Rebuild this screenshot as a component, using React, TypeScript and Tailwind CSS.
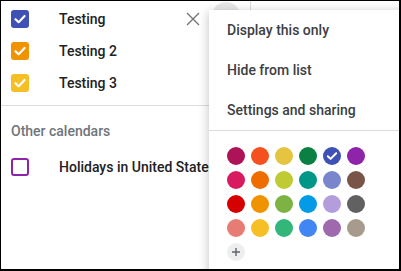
import React from "react";

const palette: string[][] = [
  ["#ad1457", "#f4511e", "#e4c441", "#0b8043", "#3f51b5", "#8e24aa"],
  ["#d81b60", "#ef6c00", "#c0ca33", "#009688", "#7986cb", "#795548"],
  ["#d50000", "#f09300", "#7cb342", "#039be5", "#b39ddb", "#616161"],
  ["#e67c73", "#f6bf26", "#33b679", "#4285f4", "#9e69af", "#a79b8e"],
];

const Check = () => (
  <svg width="18" height="18" viewBox="0 0 18 18" fill="none">
    <path d="M4.5 9.2 L7.6 12.2 L13.6 6" stroke="white" strokeWidth="2.2" strokeLinecap="round" strokeLinejoin="round" />
  </svg>
);

function CalendarRow({ name, color, close }: { name: string; color: string; close?: boolean }) {
  return (
    <div className="flex h-8 items-center pl-[10px]">
      <div className="h-[18px] w-[18px] shrink-0 rounded-[3px]" style={{ backgroundColor: color }}>
        <Check />
      </div>
      <span className="ml-[30px] text-[14px] font-medium text-[#202124]">{name}</span>
      {close && (
        <svg className="ml-auto mr-[10px]" width="14" height="14" viewBox="0 0 14 14">
          <path d="M1 1 L13 13 M13 1 L1 13" stroke="#70757a" strokeWidth="1.4" />
        </svg>
      )}
    </div>
  );
}

export default function App() {
  return (
    <div
      className="relative h-[271px] w-[401px] overflow-hidden border-t border-l border-r-2 border-b-2 border-black bg-white"
      style={{ fontFamily: "Roboto, 'Noto Sans', sans-serif" }}
    >
      <div className="w-[209px] pt-[2px]">
        <CalendarRow name="Testing" color="#3f51b5" close />
        <CalendarRow name="Testing 2" color="#f09300" />
        <CalendarRow name="Testing 3" color="#f6bf26" />
        <div className="mt-[6px] h-px w-[209px] bg-[#dadce0]" />
        <div className="pl-[10px] pt-[17px] text-[14px] font-medium leading-4 text-[#70757a]">Other calendars</div>
        <div className="mt-[12px] flex h-8 items-center pl-[10px]">
          <div className="h-[18px] w-[18px] shrink-0 rounded-[3px] border-2 border-[#8e24aa]" />
          <span className="ml-[30px] whitespace-nowrap text-[14px] font-medium text-[#202124]">Holidays in United States</span>
        </div>
      </div>

      <div className="absolute left-[211px] top-px h-7 w-7 rounded-full bg-[#e8e8e8]" />
      <div className="absolute left-[249px] top-0 h-[10px] w-px bg-[#dadce0]" />

      <div className="absolute left-[208px] top-[9px] w-[220px] bg-white shadow-[0_2px_10px_rgba(0,0,0,0.25)]">
        {["Display this only", "Hide from list", "Settings and sharing"].map((item) => (
          <div key={item} className="flex h-10 items-center pl-[18px] text-[14px] font-medium text-[#3c4043]">
            {item}
          </div>
        ))}
        <div className="h-px bg-[#dadce0]" />
        <div className="flex flex-col gap-[6px] pl-[18px] pt-4 pb-4">
          {palette.map((row, r) => (
            <div key={r} className="flex gap-[6px]">
              {row.map((c) => (
                <div
                  key={c}
                  className="flex h-[18px] w-[18px] items-center justify-center rounded-full"
                  style={{ backgroundColor: c }}
                >
                  {c === "#3f51b5" && (
                    <svg width="12" height="12" viewBox="0 0 12 12" fill="none">
                      <path d="M1.8 6.2 L4.6 8.9 L10.2 3.2" stroke="white" strokeWidth="2" strokeLinecap="round" strokeLinejoin="round" />
                    </svg>
                  )}
                </div>
              ))}
            </div>
          ))}
          <div className="flex h-[18px] w-[18px] items-center justify-center rounded-full bg-[#eeeeee]">
            <svg width="10" height="10" viewBox="0 0 10 10">
              <path d="M5 1 V9 M1 5 H9" stroke="#5f6368" strokeWidth="1.4" />
            </svg>
          </div>
        </div>
      </div>
    </div>
  );
}
